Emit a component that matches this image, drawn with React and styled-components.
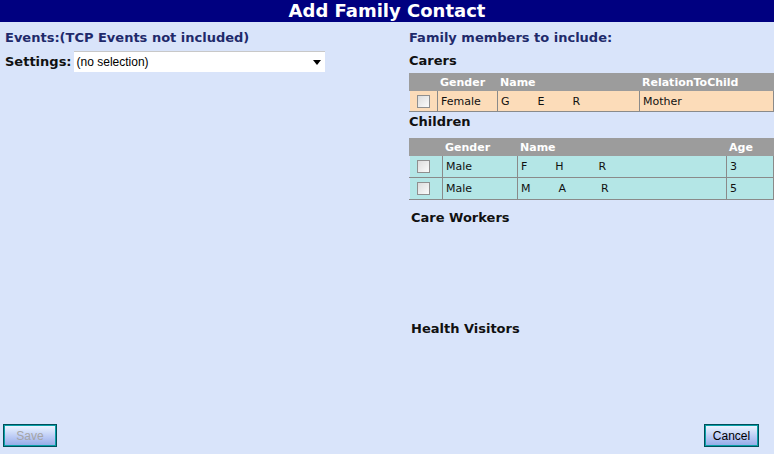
import styled, { createGlobalStyle } from 'styled-components';

const GlobalStyle = createGlobalStyle`
html, body {
  margin: 0;
  padding: 0;
  background: #d9e4fa;
}
body {
  font-family: "DejaVu Sans", Verdana, sans-serif;
}
`

const Page = styled.div`
width: 774px;
height: 454px;
display: flex;
flex-direction: column;
background: #d9e4fa;
overflow: hidden;
`

const TitleBar = styled.div`
height: 22px;
background: #000080;
color: white;
font-size: 18px;
font-weight: bold;
line-height: 22px;
text-align: center;
`

const Body = styled.div`
flex: 1;
display: grid;
grid-template-columns: 408px 1fr;
`

const Column = styled.div`
display: flex;
flex-direction: column;
padding: ${p => p.$pad || '0'};
`

const Heading = styled.div`
color: #1f2a6b;
font-size: 13px;
font-weight: bold;
margin: ${p => p.$margin || '0'};
`

const SectionTitle = styled.div`
color: #111;
font-size: 13px;
font-weight: bold;
margin: ${p => p.$margin || '0'};
padding-left: ${p => p.$indent || '0'};
`

const SettingsRow = styled.div`
display: flex;
align-items: center;
gap: 2px;
margin-top: 6px;
`

const Label = styled.span`
font-size: 13px;
font-weight: bold;
color: #111;
`

const Select = styled.div`
width: 251px;
height: 21px;
box-sizing: border-box;
background: white;
border-top: 1px solid #c8c8c8;
display: flex;
align-items: center;
justify-content: space-between;
padding: 0 4px 0 3px;
font-family: "Liberation Sans", Arial, sans-serif;
font-size: 12px;
color: #000;
`

const Table = styled.table`
width: 365px;
border-collapse: collapse;
font-size: 11px;
`

const HeadCell = styled.th`
background: #9c9c9c;
color: white;
font-weight: bold;
text-align: left;
padding: 0 2px;
height: 16px;
width: ${p => p.$w || 'auto'};
border: 1px solid #9c9c9c;
`

const Cell = styled.td`
background: ${p => p.$bg};
color: #111;
height: ${p => p.$h || '20px'};
padding: 0 3px;
border: 1px solid #8a8a8a;
border-left-color: ${p => p.$first ? 'transparent' : '#8a8a8a'};
white-space: pre;
`

const Check = styled.span`
display: inline-block;
width: 11px;
height: 11px;
margin-left: 4px;
border: 1px solid #8f8f8f;
background: linear-gradient(135deg, #dcdcdc, #fbfbfb);
vertical-align: middle;
`

const Footer = styled.div`
display: flex;
justify-content: space-between;
padding: 0 15px 7px 3px;
`

const Button = styled.button`
height: 23px;
width: ${p => p.$w};
font-family: "Liberation Sans", Arial, sans-serif;
font-size: 12px;
color: ${p => p.disabled ? '#a5a5a5' : '#000'};
border: 2px solid #0aa0a8;
outline: 1px solid #00505a;
outline-offset: -1px;
background: linear-gradient(#eaf4ff, #b9c8f4 60%, #98aee8);
padding: 0;
`

const carers = [
  { gender: 'Female', name: 'G        E        R', rel: 'Mother' },
]

const children = [
  { gender: 'Male', name: 'F        H          R', age: '3' },
  { gender: 'Male', name: 'M        A          R', age: '5' },
]

function App() {
  return (
    <Page>
      <GlobalStyle />
      <TitleBar>Add Family Contact</TitleBar>
      <Body>
        <Column $pad="8px 0 0 5px">
          <Heading>Events:(TCP Events not included)</Heading>
          <SettingsRow>
            <Label>Settings:</Label>
            <Select>
              <span>(no selection)</span>
              <svg width="8" height="5" viewBox="0 0 8 5"><path d="M0 0h8L4 5z" fill="#000" /></svg>
            </Select>
          </SettingsRow>
        </Column>
        <Column $pad="8px 0 0 1px">
          <Heading>Family members to include:</Heading>
          <SectionTitle $margin="8px 0 5px">Carers</SectionTitle>
          <Table>
            <thead>
              <tr>
                <HeadCell $w="23px"></HeadCell>
                <HeadCell $w="55px">Gender</HeadCell>
                <HeadCell $w="137px">Name</HeadCell>
                <HeadCell>RelationToChild</HeadCell>
              </tr>
            </thead>
            <tbody>
              {carers.map((c, i) => (
                <tr key={i}>
                  <Cell $bg="#fcdcb9" $first><Check /></Cell>
                  <Cell $bg="#fcdcb9">{c.gender}</Cell>
                  <Cell $bg="#fcdcb9">{c.name}</Cell>
                  <Cell $bg="#fcdcb9">{c.rel}</Cell>
                </tr>
              ))}
            </tbody>
          </Table>
          <SectionTitle $margin="2px 0 9px">Children</SectionTitle>
          <Table>
            <thead>
              <tr>
                <HeadCell $w="28px"></HeadCell>
                <HeadCell $w="70px">Gender</HeadCell>
                <HeadCell $w="204px">Name</HeadCell>
                <HeadCell>Age</HeadCell>
              </tr>
            </thead>
            <tbody>
              {children.map((c, i) => (
                <tr key={i}>
                  <Cell $bg="#b4e6e6" $h="21px" $first><Check /></Cell>
                  <Cell $bg="#b4e6e6" $h="21px">{c.gender}</Cell>
                  <Cell $bg="#b4e6e6" $h="21px">{c.name}</Cell>
                  <Cell $bg="#b4e6e6" $h="21px">{c.age}</Cell>
                </tr>
              ))}
            </tbody>
          </Table>
          <SectionTitle $margin="10px 0 0" $indent="2px">Care Workers</SectionTitle>
          <SectionTitle $margin="96px 0 0" $indent="2px">Health Visitors</SectionTitle>
        </Column>
      </Body>
      <Footer>
        <Button $w="54px" disabled>Save</Button>
        <Button $w="55px">Cancel</Button>
      </Footer>
    </Page>
  )
}

export default App;
